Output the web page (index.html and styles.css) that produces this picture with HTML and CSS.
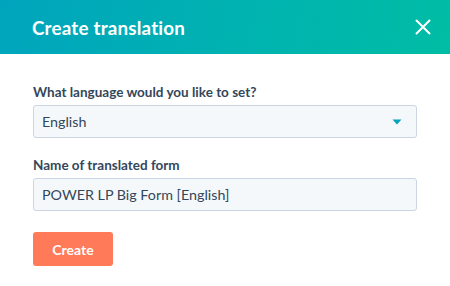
FILE: index.html
```html
<!DOCTYPE html>
<html lang="en">
<head>
    <meta charset="UTF-8">
    <title>Create translation</title>
    <link rel="stylesheet" href="styles.css">
</head>
<body>
    <div class="modal">
        <div class="modal-header">
            <h2>Create translation</h2>
            <button type="button" class="close" aria-label="Close">
                <svg width="16" height="16" viewBox="0 0 16 16">
                    <path d="M1.5 1.5 L14.5 14.5 M14.5 1.5 L1.5 14.5" stroke="#fff" stroke-width="2" stroke-linecap="round"/>
                </svg>
            </button>
        </div>
        <form class="modal-body">
            <label class="field">
                <span class="field-label">What language would you like to set?</span>
                <span class="select">
                    <span>English</span>
                    <svg class="caret" width="10" height="6" viewBox="0 0 10 6">
                        <path d="M0.5 0.5 H9.5 L5 5.5 Z" fill="#00a4bd"/>
                    </svg>
                </span>
            </label>
            <label class="field">
                <span class="field-label">Name of translated form</span>
                <input type="text" value="POWER LP Big Form [English]">
            </label>
            <button type="submit" class="btn-create">Create</button>
        </form>
    </div>
</body>
</html>
```

FILE: styles.css
```css
* {
    box-sizing: border-box;
}

body {
    margin: 0;
    font-family: Lato, "Noto Sans", sans-serif;
    color: #33475b;
    background: #fff;
}

.modal {
    width: 450px;
    height: 286px;
    background: #fff;
}

.modal-header {
    height: 54px;
    padding: 0 19px 0 32px;
    display: flex;
    align-items: center;
    justify-content: space-between;
    background: linear-gradient(100deg, #00a5bd 0%, #00b3b0 55%, #00bda5 100%);
}

.modal-header h2 {
    margin: 0;
    font-size: 18.8px;
    font-weight: 700;
    color: #fff;
    letter-spacing: 0.2px;
}

.close {
    background: none;
    border: none;
    padding: 0;
    width: 16px;
    height: 16px;
    display: flex;
    cursor: pointer;
}

.modal-body {
    padding: 30px 33px 0 33px;
}

.field {
    display: flex;
    flex-direction: column;
    margin-bottom: 19px;
}

.field-label {
    font-size: 13.5px;
    font-weight: 700;
    line-height: 16px;
    margin-bottom: 5px;
}

.select, input {
    height: 33px;
    width: 384px;
    padding: 0 8px;
    font-family: inherit;
    font-size: 14.3px;
    color: #33475b;
    background: #f5f8fa;
    border: 1px solid #cbd6e2;
    border-radius: 3px;
}

.select {
    display: flex;
    align-items: center;
    justify-content: space-between;
    padding-right: 14px;
}

.caret {
    display: block;
}

.btn-create {
    margin-top: 2px;
    width: 80px;
    height: 34px;
    background: #ff7a59;
    color: #fff;
    border: none;
    border-radius: 3px;
    font-family: inherit;
    font-size: 14px;
    font-weight: 700;
    cursor: pointer;
}
```
